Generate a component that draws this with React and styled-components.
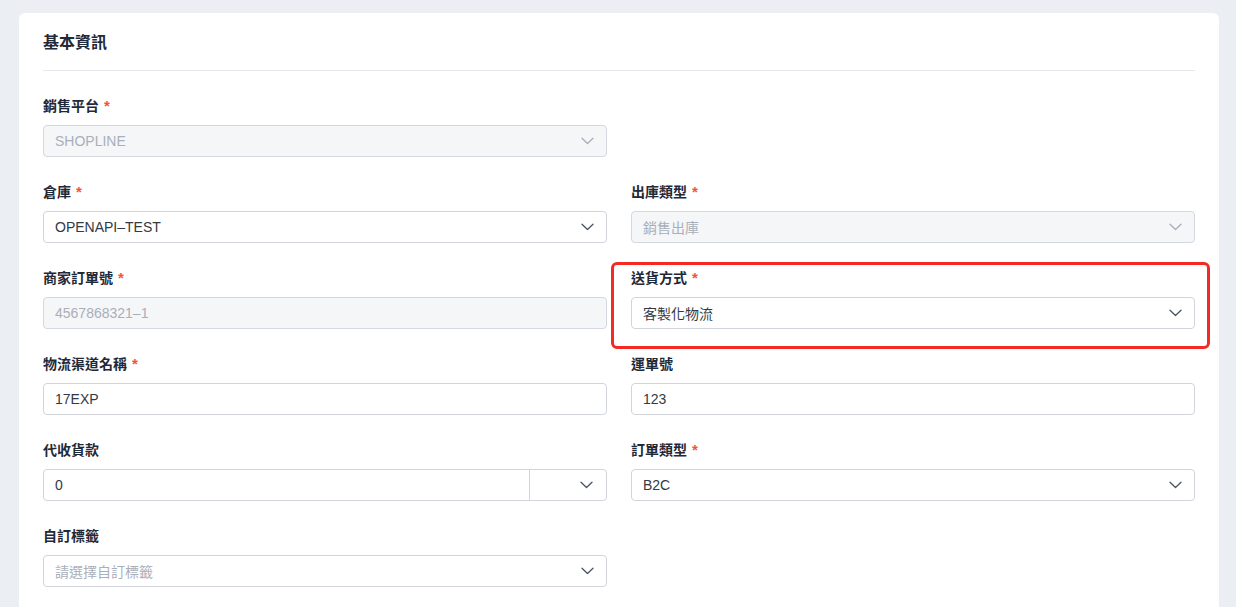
import React from "react"
import styled, { createGlobalStyle } from "styled-components"

const Global = createGlobalStyle`
  * { box-sizing: border-box; }
  body {
    margin: 0;
    background: #ebeef2;
    font-family: "Liberation Sans", "Noto Sans CJK TC", sans-serif;
    color: #1f2937;
  }
`

const Page = styled.div`
  padding: 13px 17px 0 19px;
  height: 607px;
  overflow: hidden;
`

const Card = styled.div`
  background: #ffffff;
  border-radius: 6px 6px 0 0;
  padding: 0 24px 40px;
  min-height: 620px;
`

const Header = styled.div`
  height: 58px;
  display: flex;
  align-items: center;
  border-bottom: 1px solid #e6e8ee;
  font-size: 16px;
  font-weight: 700;
  color: #1f2937;
  padding-bottom: 1px;
`

const Grid = styled.div`
  display: grid;
  grid-template-columns: 1fr 1fr;
  column-gap: 24px;
  row-gap: 24px;
  padding-top: 24px;
`

const Field = styled.div`
  position: relative;
  grid-column: ${p => (p.$col ? p.$col : "auto")};
`

const Label = styled.div`
  height: 22px;
  line-height: 22px;
  font-size: 14px;
  font-weight: 700;
  color: #1f2937;
  margin-bottom: 8px;
`

const Star = styled.span`
  color: #f5533d;
  margin-left: 5px;
  font-size: 15px;
`

const Box = styled.div`
  height: 32px;
  display: flex;
  align-items: center;
  border: 1px solid ${p => (p.$disabled ? "#d3d7df" : "#d1d5db")};
  border-radius: 4px;
  background: ${p => (p.$disabled ? "#f5f6f8" : "#ffffff")};
  overflow: hidden;
`

const Value = styled.div`
  flex: 1;
  padding: 0 11px;
  font-size: 14px;
  color: ${p => (p.$muted ? "#a9afba" : "#333a44")};
  white-space: nowrap;
`

const Chevron = styled.div`
  width: 38px;
  height: 100%;
  display: flex;
  align-items: center;
  justify-content: center;
  color: ${p => (p.$muted ? "#a9afba" : "#4b5563")};
`

const Addon = styled.div`
  width: 77px;
  height: 100%;
  border-left: 1px solid #d1d5db;
  display: flex;
  align-items: center;
  justify-content: flex-end;
  padding-right: 1px;
  color: #4b5563;
`

const Highlight = styled.div`
  position: absolute;
  left: -20px;
  right: -15px;
  top: -5px;
  bottom: -20px;
  border: 3px solid #f52a24;
  border-radius: 6px;
  pointer-events: none;
`

const Arrow = () => (
  <svg width="13" height="8" viewBox="0 0 13 8" fill="none">
    <path d="M1 1.2L6.5 6.5L12 1.2" stroke="currentColor" strokeWidth="1.3" strokeLinecap="round" strokeLinejoin="round" />
  </svg>
)

const Select = ({ value, disabled, placeholder }) => (
  <Box $disabled={disabled}>
    <Value $muted={disabled || placeholder}>{value}</Value>
    <Chevron $muted={disabled}><Arrow /></Chevron>
  </Box>
)

const Input = ({ value, disabled }) => (
  <Box $disabled={disabled}>
    <Value $muted={disabled}>{value}</Value>
  </Box>
)

const Req = ({ children, required }) => (
  <Label>{children}{required && <Star>*</Star>}</Label>
)

export default function App() {
  return (
    <Page>
      <Global />
      <Card>
        <Header>基本資訊</Header>
        <Grid>
          <Field $col="1">
            <Req required>銷售平台</Req>
            <Select value="SHOPLINE" disabled />
          </Field>
          <Field />
          <Field>
            <Req required>倉庫</Req>
            <Select value="OPENAPI–TEST" />
          </Field>
          <Field>
            <Req required>出庫類型</Req>
            <Select value="銷售出庫" disabled />
          </Field>
          <Field>
            <Req required>商家訂單號</Req>
            <Input value="4567868321–1" disabled />
          </Field>
          <Field>
            <Highlight />
            <Req required>送貨方式</Req>
            <Select value="客製化物流" />
          </Field>
          <Field>
            <Req required>物流渠道名稱</Req>
            <Input value="17EXP" />
          </Field>
          <Field>
            <Req>運單號</Req>
            <Input value="123" />
          </Field>
          <Field>
            <Req>代收貨款</Req>
            <Box>
              <Value>0</Value>
              <Addon><Chevron><Arrow /></Chevron></Addon>
            </Box>
          </Field>
          <Field>
            <Req required>訂單類型</Req>
            <Select value="B2C" />
          </Field>
          <Field>
            <Req>自訂標籤</Req>
            <Select value="請選擇自訂標籤" placeholder />
          </Field>
        </Grid>
      </Card>
    </Page>
  )
}
